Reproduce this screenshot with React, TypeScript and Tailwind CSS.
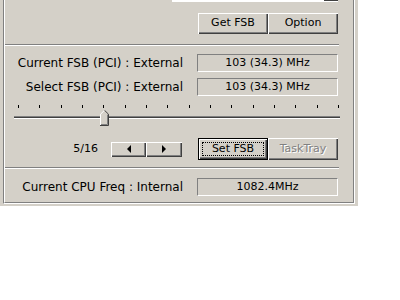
import React from 'react';

const raised = 'shadow-[inset_1px_1px_0_#fff,inset_-1px_-1px_0_#404040,inset_-2px_-2px_0_#808080]';

function Btn({ label, disabled, w = 'w-[70px]' }: { label: string; disabled?: boolean; w?: string }) {
    return (
        <div className={`${w} h-[21px] flex items-center justify-center bg-[#d4d0c8] text-[11px] ${raised}`}>
            <span className={disabled ? 'text-[#808080] [text-shadow:1px_1px_0_#fff]' : 'text-black'}>{label}</span>
        </div>
    );
}

function Sunken({ value }: { value: string }) {
    return (
        <div className="w-[141px] h-[18px] flex items-center justify-center border border-t-[#808080] border-l-[#808080] border-b-white border-r-white text-[11px] text-black">
            {value}
        </div>
    );
}

function Separator({ className }: { className?: string }) {
    return <div className={`w-[334px] h-[2px] border-t border-t-[#808080] border-b border-b-white ${className ?? ''}`} />;
}

function Row({ label, value, className }: { label: string; value: string; className?: string }) {
    return (
        <div className={`flex items-center ${className ?? ''}`}>
            <div className="w-[178px] text-right text-[12px] text-black leading-none">{label}</div>
            <div className="ml-[14px]">
                <Sunken value={value} />
            </div>
        </div>
    );
}

export default function App() {
    const ticks = Array.from({ length: 16 });

    return (
        <div className="w-[358px] h-[206px] bg-[#d4d0c8] pl-[3px] pr-[3px] pb-[2px] font-['DejaVu_Sans',sans-serif]">
            {/* etched frame */}
            <div className="h-full border-l border-r border-b border-l-[#808080] border-r-white border-b-white">
                <div className="h-full border-l border-r border-b border-l-white border-r-[#808080] border-b-[#808080]">
                    {/* bottom of the combo box above */}
                    <div className="ml-[167px] w-[166px]">
                        <div className="flex h-px">
                            <div className="flex-1 bg-white" />
                            <div className="w-[14px] bg-[#404040]" />
                        </div>
                        <div className="h-px bg-white" />
                    </div>

                    <div className="mt-[11px] ml-[193px] flex">
                        <Btn label="Get FSB" />
                        <Btn label="Option" />
                    </div>

                    <Separator className="mt-[10px]" />

                    <Row className="mt-[8px]" label="Current FSB (PCI) : External" value="103 (34.3) MHz" />
                    <Row className="mt-[6px]" label="Select FSB (PCI) : External" value="103 (34.3) MHz" />

                    {/* slider */}
                    <div className="relative mt-[9px] ml-[8px] w-[328px] h-[22px]">
                        <div className="flex justify-between pl-[5px] pr-[2px] h-[3px]">
                            {ticks.map((_, i) => (
                                <div key={i} className="w-px h-[3px] bg-black" />
                            ))}
                        </div>
                        <div className="mt-[8px] mx-px h-[3px] flex flex-col">
                            <div className="h-px bg-[#808080]" />
                            <div className="h-px bg-[#404040]" />
                            <div className="h-px bg-white" />
                        </div>
                        <svg className="absolute left-[87px] top-[5px]" width="9" height="16" viewBox="0 0 9 16">
                            <path d="M0 4 L4 0 L8 4 L8 15 L0 15 Z" fill="#d4d0c8" />
                            <path d="M0.5 15 V4.2 L4.5 0.3" stroke="#fff" fill="none" />
                            <path d="M4.5 0.3 L8.5 4.2 V15.5 H0" stroke="#404040" fill="none" />
                            <path d="M7.5 4.6 V14.5 H1" stroke="#808080" fill="none" />
                        </svg>
                    </div>

                    {/* nav row */}
                    <div className="mt-[11px] flex items-center h-[22px]">
                        <div className="w-[93px] text-right text-[11px] text-black">5/16</div>
                        <div className="ml-[13px] flex">
                            <div className={`w-[35px] h-[15px] flex items-center justify-center ${raised}`}>
                                <div className="w-0 h-0 border-y-[4px] border-y-transparent border-r-[4px] border-r-black" />
                            </div>
                            <div className={`w-[36px] h-[15px] flex items-center justify-center ${raised}`}>
                                <div className="w-0 h-0 border-y-[4px] border-y-transparent border-l-[4px] border-l-black" />
                            </div>
                        </div>
                        <div className="ml-[16px] flex">
                            <div className="w-[70px] h-[22px] border border-black">
                                <div className={`relative w-full h-full flex items-center justify-center text-[11px] text-black ${raised}`}>
                                    <div className="absolute inset-[3px] border border-dotted border-black" />
                                    Set FSB
                                </div>
                            </div>
                            <div className="h-[22px] flex">
                                <div className={`w-[70px] h-[22px] flex items-center justify-center text-[11px] ${raised}`}>
                                    <span className="text-[#808080] [text-shadow:1px_1px_0_#fff]">TaskTray</span>
                                </div>
                            </div>
                        </div>
                    </div>

                    <Separator className="mt-[7px]" />

                    <Row className="mt-[9px]" label="Current CPU Freq : Internal" value="1082.4MHz" />
                </div>
            </div>
        </div>
    );
}
